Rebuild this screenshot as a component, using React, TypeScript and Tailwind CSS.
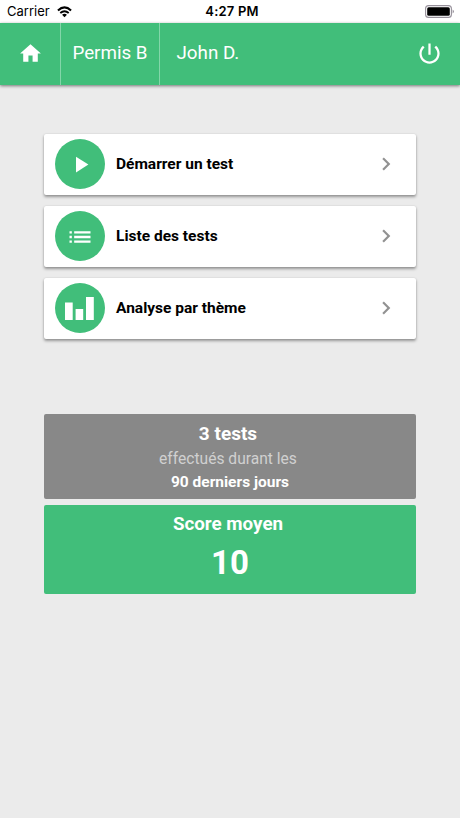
import type { ReactNode } from "react";

const PlayIcon = () => (
  <svg viewBox="0 0 24 24" className="size-[27px]" fill="currentColor">
    <path d="M8 5v14l11-7z" />
  </svg>
);

const ListIcon = () => (
  <svg viewBox="0 0 24 24" className="mt-[1px] size-7" fill="currentColor">
    <path d="M3 13h2v-2H3v2zm0 4h2v-2H3v2zm0-8h2V7H3v2zm4 4h14v-2H7v2zm0 4h14v-2H7v2zM7 7v2h14V7H7z" />
  </svg>
);

const ChartIcon = () => (
  <svg viewBox="0 0 29 23" className="mr-[1px] mt-[1px] h-[23px] w-[29px]" fill="currentColor">
    <path d="M0 5.5h7.7V23H0zM10.6 12h7.6v11h-7.6zM21 0h7.8v23H21z" />
  </svg>
);

const MenuCard = ({ icon, label }: { icon: ReactNode; label: string }) => (
  <button className="flex h-[61px] w-full items-center rounded-[2px] bg-white pl-[11px] pr-[17px] text-left shadow-[0_2px_3px_rgba(0,0,0,0.36),0_0_2px_rgba(0,0,0,0.12)]">
    <span className="mb-[1px] flex size-[50px] items-center justify-center rounded-full bg-[#41be7a] text-white">{icon}</span>
    <span className="ml-[11px] flex-1 pt-[1px] text-[15.5px] font-bold text-black">{label}</span>
    <svg viewBox="0 0 24 24" className="mb-[1px] size-[26px]" fill="#929292">
      <path d="M10 6L8.59 7.41 13.17 12l-4.58 4.59L10 18l6-6z" />
    </svg>
  </button>
);

const StatusBar = () => (
  <div className="flex h-[23px] items-center justify-between bg-white pl-[7px] pr-[6px] text-black font-['Inter',sans-serif]">
    <div className="flex flex-1 items-center gap-[7px] pt-[1px]">
      <span className="text-[13px]">Carrier</span>
      <svg viewBox="0 0 16 12" className="mb-[1px] h-[12px] w-[15px]" fill="none" stroke="currentColor">
        <path d="M1 4.3Q8-2.1 15 4.3" strokeWidth="2.2" />
        <path d="M3.5 7.1Q8 3.1 12.5 7.1" strokeWidth="2" />
        <path d="M5.4 9Q8 6.8 10.6 9L8 11.6z" fill="currentColor" stroke="none" />
      </svg>
    </div>
    <span className="pl-[3px] pt-[1px] text-[13px] font-semibold tracking-[0.2px]">4:27 PM</span>
    <div className="flex flex-1 justify-end">
      <svg viewBox="0 0 29 13" className="h-[13px] w-[29px]">
        <rect x="0.6" y="0.6" width="25.8" height="11.8" rx="3" fill="none" stroke="#96909a" strokeWidth="1.1" />
        <rect x="2.2" y="2.2" width="22.6" height="8.6" rx="1.5" fill="#000" />
        <path d="M27.6 4.5q1.4.8 1.4 2t-1.4 2z" fill="#96909a" />
      </svg>
    </div>
  </div>
);

const Header = () => (
  <header className="flex h-[62px] bg-[#41be7a] text-[18.8px] text-white shadow-[0_1px_3px_rgba(0,0,0,0.5)]">
    <div className="flex w-[61px] items-center justify-center border-r border-[#83d6a9] pb-[1px]">
      <svg viewBox="0 0 24 24" className="size-[25px]" fill="currentColor">
        <path d="M10 20v-6h4v6h5v-8h3L12 3 2 12h3v8z" />
      </svg>
    </div>
    <div className="flex w-[99px] items-center justify-center border-r border-[#83d6a9] pb-[1px]">Permis B</div>
    <div className="flex flex-1 items-center pb-[1px] pl-[16.5px]">John D.</div>
    <div className="flex items-center pb-[1px] pr-[17px]">
      <svg viewBox="0 0 24 24" className="size-[27px]" fill="currentColor">
        <path d="M13 3h-2v10h2V3zm4.83 2.17l-1.42 1.42C17.99 7.86 19 9.81 19 12c0 3.87-3.13 7-7 7s-7-3.13-7-7c0-2.19 1.01-4.14 2.58-5.42L6.17 5.17C4.23 6.82 3 9.26 3 12c0 4.97 4.03 9 9 9s9-4.03 9-9c0-2.74-1.23-5.18-3.17-6.83z" />
      </svg>
    </div>
  </header>
);

export default function App() {
  return (
    <div className="min-h-[818px] bg-[#ebebeb] font-['Roboto',sans-serif]">
      <StatusBar />
      <Header />
      <main className="px-11 pt-[49px]">
        <nav className="flex flex-col gap-[11px]">
          <MenuCard icon={<PlayIcon />} label="Démarrer un test" />
          <MenuCard icon={<ListIcon />} label="Liste des tests" />
          <MenuCard icon={<ChartIcon />} label="Analyse par thème" />
        </nav>
        <section className="mt-[75px] h-[85px] rounded-[2px] bg-[#888888] pt-[7px] text-center text-white">
          <p className="pr-1 text-[19px] font-bold leading-[25px]">3 tests</p>
          <p className="pr-1 pt-[1px] text-[15.6px] leading-[25px] text-[#d0d0d0]">effectués durant les</p>
          <p className="text-[15.5px] font-bold leading-[21px]">90 derniers jours</p>
        </section>
        <section className="mt-[6px] h-[89px] rounded-[2px] bg-[#41be7a] pt-[7px] text-center text-white">
          <p className="pr-1 text-[18.8px] font-bold leading-[25px]">Score moyen</p>
          <p className="text-[33px] font-bold leading-[51px]">10</p>
        </section>
      </main>
    </div>
  );
}
